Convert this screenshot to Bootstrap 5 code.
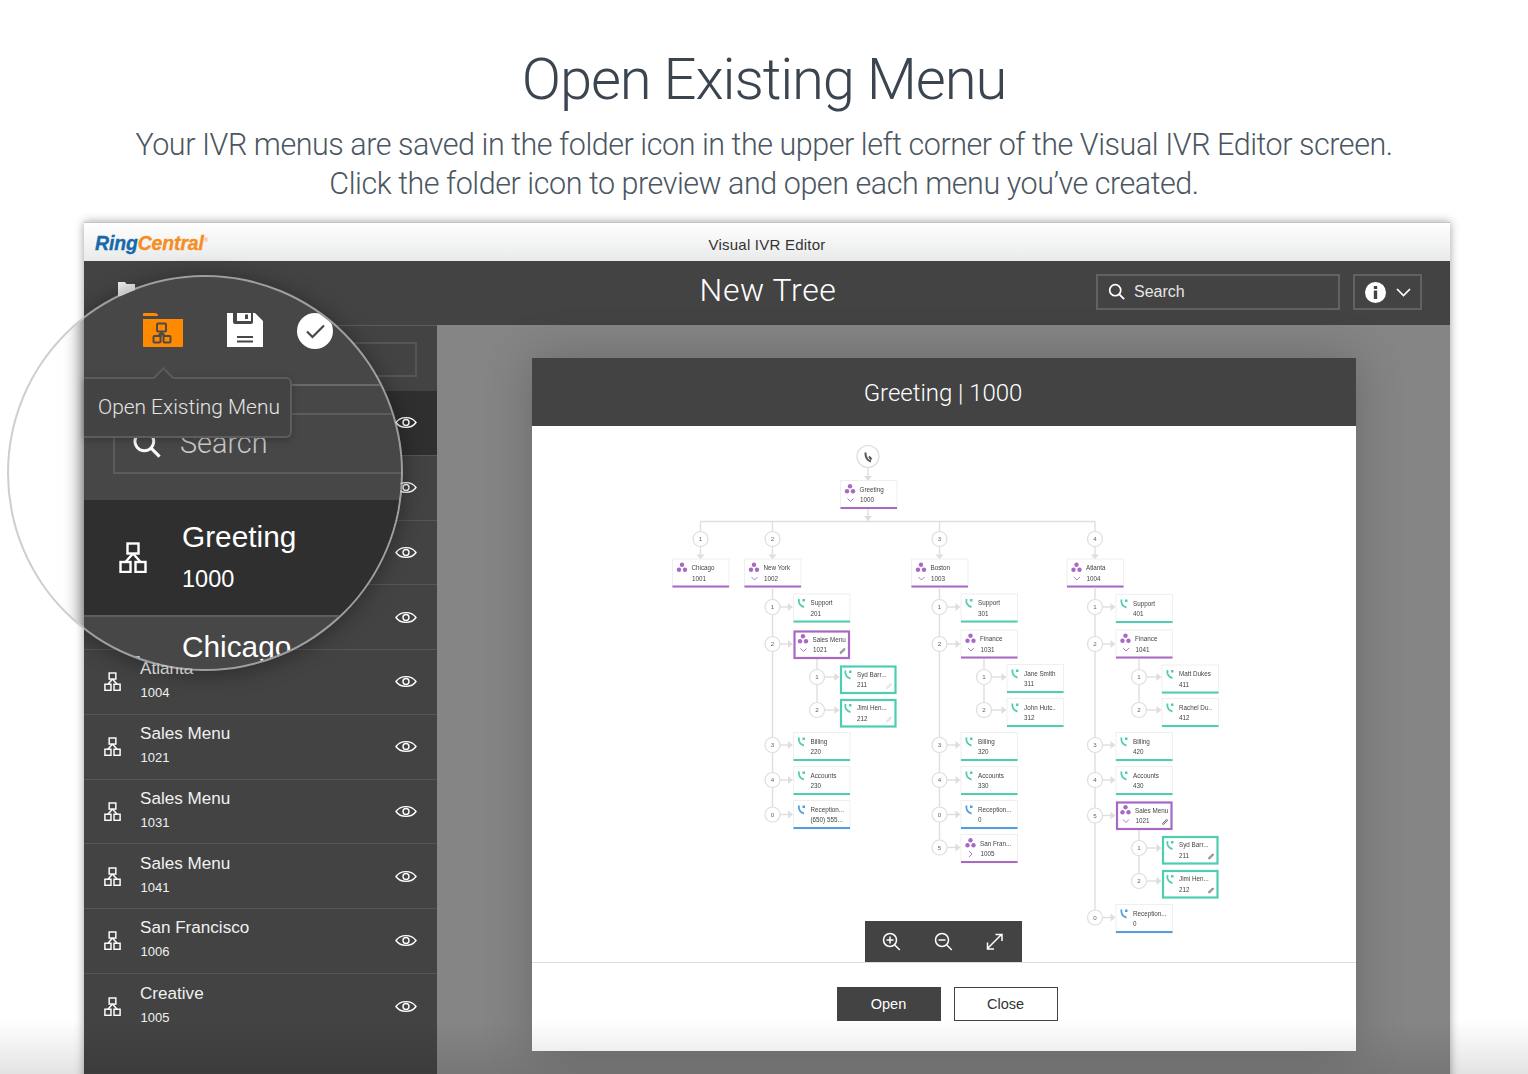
<!doctype html>
<html lang="en">
<head>
<meta charset="utf-8">
<title>Open Existing Menu</title>
<link href="https://cdn.jsdelivr.net/npm/bootstrap@5.3.0/dist/css/bootstrap.min.css" rel="stylesheet">
<style>
html,body{height:1074px;overflow:hidden}
body{position:relative;background:#fff;font-family:"Liberation Sans",Arial,sans-serif;color:#333}
.page-head{padding-top:43px;text-align:center}
.page-title{font:300 58px/72px Roboto,sans-serif;color:#3b4550;margin:0;letter-spacing:-1.15px}
.page-sub{font:300 30.5px/38.5px Roboto,sans-serif;color:#4b5661;margin:11px 0 19px;letter-spacing:-.46px}
.app-win{position:relative;width:1366px;height:900px;margin-left:84px;background:#858585;box-shadow:0 0 9px rgba(0,0,0,.38);overflow:hidden}
.title-bar{height:39px;border-top:1px solid #c4c4c4;background:linear-gradient(#fff,#e9eaea);position:relative}
.brand-logo{position:absolute;left:11px;top:8px;font:italic 700 19.4px/24px "Liberation Sans",sans-serif;color:#f68d1f;letter-spacing:-.1px;-webkit-text-stroke:.35px currentColor}
.brand-logo b{color:#1769ab}
.brand-logo sup{font-size:6px;top:-1.4em;font-weight:400;-webkit-text-stroke:0}
.title-text{font-size:15px;line-height:43px;text-align:center;color:#333;letter-spacing:.22px}
.top-bar{height:64px;background:#434343;color:#fff;padding:0 28px 0 34px}
.top-side{flex:1 1 0}
.top-folder{display:block;margin-bottom:8px}
.tree-name{font:300 32px/1 Roboto,sans-serif;letter-spacing:.6px;padding:0 4px 7px 0;color:#fff}
.top-search{width:244px;height:36px;border:2px solid #626262;padding-left:10px;font-size:16px;color:#e6e6e6;margin-top:-2px;gap:9px;padding-bottom:1px}
.top-info{width:69px;height:36px;border:2px solid #626262;margin-left:13px;margin-top:-2px;padding-left:10px;gap:10px}
.work-area{height:797px}
.side-panel{width:353px;background:#434343;border-top:1px solid #5c5c5c;height:100%;flex:none}
.side-find{height:65px;padding:16px 20px 0 21px}
.side-find div{height:35px;border:2px solid #565656}
.menu-row{height:64.75px;background:transparent;color:#fff;border:0;border-bottom:2px solid #565656;border-radius:0;padding:0 20px}
.menu-row.is-current{background:#2f2f2f}
.menu-icon{width:17px;height:19px;margin-right:19px;flex:none}
.menu-name{font-size:17.1px;line-height:21px;margin-top:-4px;color:#f1f1f1}
.menu-num{font-size:13px;line-height:17px;margin-top:5px;padding-left:.5px;color:#f1f1f1}
.stage{flex:1 1 0;padding-top:33px;min-width:0}
.ivr-modal{width:824px;height:693px;margin:0 0 0 95px;background:#fff;border-radius:0;border:0;box-shadow:0 0 45px rgba(0,0,0,.22)}
.ivr-head{height:68px;background:#434343;color:#fff;font:300 24px/70px Roboto,sans-serif;text-align:center;padding-right:2px;letter-spacing:-.03px}
.ivr-canvas{position:relative;height:537px;border-bottom:1px solid #dcdcdc}
.ivr-canvas svg.chart{display:block;filter:blur(.35px)}
.zoom-tools{position:absolute;left:332.5px;bottom:0;width:157px;height:41px;background:#434343}
.ivr-foot{padding:24px 0 0 6px;gap:13px}
.foot-btn{width:104px;height:34px;border-radius:0;font-size:14.5px;line-height:1;padding:0;border:1px solid #434343}
.foot-btn.is-dark{background:#434343;color:#fff}
.foot-btn.is-line{background:#fff;color:#333}
.lens-shade{position:absolute;left:-77px;top:53px;width:396px;height:396px;border-radius:50%;box-shadow:0 2px 22px rgba(0,0,0,.38)}
.lens{position:absolute;left:7px;top:275px;width:396px;height:396px;border-radius:50%;border:2px solid rgba(165,165,165,.55);overflow:hidden;background:rgba(255,255,255,.45)}
.lens-panel{position:absolute;left:75px;top:0;right:0;bottom:0;background:#474747;box-shadow:-3px 0 16px rgba(0,0,0,.5);color:#fff}
.lens-tools{height:109px;padding:36px 0 0 59px;border-bottom:2px solid #6a6a6a}
.lens-save{margin-left:44px}
.lens-check{margin-left:34px}
.lens-find{height:114px;padding:27px 0 0 29px}
.lens-find div{height:61px;border:2px solid #5d5d5d;border-right:0;font:300 28.8px/1 Roboto,sans-serif;color:#c9c9c9;padding:0 0 0 17px;gap:19px}
.lens-current{height:117px;background:#2f2f2f;border-bottom:2px solid #5d5d5d;padding-left:35px}
.lens-icon{width:28px;height:31px;margin-right:35px;flex:none}
.lens-text{margin-top:-4px}
.lens-name{font-size:29.8px;line-height:36px}
.lens-num{font-size:23.5px;line-height:28px;margin-top:10px}
.lens-next{padding:13px 0 0 35px}
.lens-next .lens-name{margin-top:-1px}
.lens-next .lens-icon{margin-top:26px}
.tip-box{position:absolute;left:0;top:100px;width:208px;height:61px;background:#434343;border:2px solid #5c5c5c;border-left:0;border-radius:0 6px 6px 0;font:300 20.9px/57px Roboto,sans-serif;color:#e4e4e4;padding-left:14px;box-shadow:0 2px 7px rgba(0,0,0,.25)}
.tip-box::before{content:"";position:absolute;left:72px;top:-9px;width:15px;height:15px;background:#434343;border:2px solid #5c5c5c;border-right:0;border-bottom:0;transform:rotate(45deg)}
.fade-foot{position:absolute;left:0;right:0;bottom:0;height:54px;background:linear-gradient(rgba(0,0,0,0),rgba(0,0,0,.11));pointer-events:none}
</style>
</head>
<body>
<svg width="0" height="0" class="position-absolute">
  <symbol id="i-org" viewBox="0 0 28 31"><g fill="none" stroke="currentColor" stroke-width="2.4"><rect x="8.5" y="1.5" width="11" height="10"/><rect x="1.5" y="20" width="10" height="10"/><rect x="16.5" y="20" width="10" height="10"/><path d="M14 11.5 6.500 20M14 11.5 21.500 20"/></g></symbol>
  <symbol id="i-eye" viewBox="0 0 22 15"><path d="M1 7.500C5.500 1 16.500 1 21 7.500 16.500 14 5.500 14 1 7.500Z" fill="none" stroke="currentColor" stroke-width="1.400"/><circle cx="11" cy="7.500" r="3" fill="none" stroke="currentColor" stroke-width="1.400"/></symbol>
  <symbol id="i-find" viewBox="0 0 20 20"><circle cx="8.500" cy="8.500" r="6.500" fill="none" stroke="currentColor" stroke-width="2"/><path d="M13.300 13.300 19 19" stroke="currentColor" stroke-width="2.200" fill="none"/></symbol>
</svg>

<header class="page-head">
  <h1 class="page-title">Open Existing Menu</h1>
  <p class="page-sub">Your IVR menus are saved in the folder icon in the upper left corner of the Visual IVR Editor screen.<br>Click the folder icon to preview and open each menu you’ve created.</p>
</header>

<main class="app-win">
  <div class="title-bar">
    <div class="brand-logo"><b>Ring</b>Central<sup>®</sup></div>
    <div class="title-text">Visual IVR Editor</div>
  </div>
  <div class="top-bar d-flex align-items-center">
    <div class="top-side">
      <svg class="top-folder" width="17" height="14" viewBox="0 0 17 14"><path d="M0 0h7l1.500 2H17v12H0Z" fill="#efefef"/></svg>
    </div>
    <div class="tree-name">New Tree</div>
    <div class="top-side d-flex justify-content-end">
      <div class="top-search d-flex align-items-center">
        <svg width="17" height="17" class="text-white"><use href="#i-find"/></svg>
        <span>Search</span>
      </div>
      <div class="top-info d-flex align-items-center">
        <svg width="21" height="21" viewBox="0 0 21 21"><circle cx="10.500" cy="10.500" r="10.500" fill="#fff"/><rect x="8.800" y="8.500" width="3.400" height="8.500" fill="#434343"/><rect x="8.800" y="4" width="3.400" height="3" fill="#434343"/></svg>
        <svg width="15" height="9" viewBox="0 0 15 9"><path d="M1 1l6.500 6.500L14 1" fill="none" stroke="#fff" stroke-width="1.700"/></svg>
      </div>
    </div>
  </div>
  <div class="work-area d-flex">
    <aside class="side-panel">
      <div class="side-find"><div></div></div>
      <div class="list-group list-group-flush" id="menuList"></div>
    </aside>
    <section class="stage">
      <div class="card ivr-modal">
        <div class="ivr-head">Greeting | 1000</div>
        <div class="ivr-canvas">
          <svg class="chart" id="chart" width="824" height="536" viewBox="532 426 824 536"></svg>
          <div class="zoom-tools d-flex">
            <svg width="157" height="41" viewBox="0 0 157 41" fill="none" stroke="#fff" stroke-width="1.500">
              <circle cx="25" cy="19" r="6.500"/><path d="M21.500 19h7M25 15.500v7M29.800 24l5 5" />
              <circle cx="77" cy="19" r="6.500"/><path d="M73.500 19h7M81.800 24l5 5"/>
              <path d="M123 27l13-13M130.500 13.500h6.500v6.500M122.500 21.500v6.500h6.500"/>
            </svg>
          </div>
        </div>
        <div class="ivr-foot d-flex justify-content-center">
          <button type="button" class="btn foot-btn is-dark">Open</button>
          <button type="button" class="btn foot-btn is-line">Close</button>
        </div>
      </div>
    </section>
  </div>
  <div class="lens-shade"></div>
</main>

<div class="lens">
  <div class="lens-panel">
    <div class="lens-tools d-flex align-items-start">
      <svg width="40" height="34" viewBox="0 0 40 34"><path d="M0 1q0-1 1-1h11q2 0 3 2v1H0ZM0 6h40v27q0 1-1 1H1q-1 0-1-1Z" fill="#ff8a00"/><g fill="none" stroke="#4a4a4a" stroke-width="2"><rect x="14" y="10.500" width="9" height="8" rx="1"/><rect x="10.500" y="23" width="7" height="6.500" rx="1"/><rect x="20.500" y="23" width="7" height="6.500" rx="1"/><path d="M18.500 18.500v5M15 23l3.500-3.500L22 23"/></g></svg>
      <svg width="36" height="34" viewBox="0 0 36 34" class="lens-save"><path d="M0 0h6v9q0 2 2 2h16q2 0 2-2V0h2l8 8v26H0Z" fill="#fff"/><rect x="9" y="0" width="15" height="9" fill="#474747"/><rect x="10" y="0" width="14" height="8" fill="#fff"/><rect x="18" y="1.500" width="3" height="4.500" fill="#474747"/><path d="M10 24h16M10 28.500h16" stroke="#474747" stroke-width="2"/></svg>
      <svg width="36" height="36" viewBox="0 0 36 36" class="lens-check"><circle cx="18" cy="18" r="18" fill="#fff"/><path d="M10 18.500l5.500 5.500L27 12.500" fill="none" stroke="#474747" stroke-width="2.200"/></svg>
    </div>
    <div class="lens-find">
      <div class="d-flex align-items-center">
        <svg width="29" height="29" class="text-light"><use href="#i-find"/></svg>
        <span>Search</span>
      </div>
    </div>
    <div class="lens-current d-flex align-items-center">
      <svg class="lens-icon"><use href="#i-org"/></svg>
      <div class="lens-text">
        <div class="lens-name">Greeting</div>
        <div class="lens-num">1000</div>
      </div>
    </div>
    <div class="lens-next d-flex">
      <svg class="lens-icon"><use href="#i-org"/></svg>
      <div class="lens-name">Chicago</div>
    </div>
    <div class="tip-box">Open Existing Menu</div>
  </div>
</div>
<div class="fade-foot"></div>

<script>
(function(){
  var rows=[["Greeting","1000",1],["Chicago","1001"],["New York","1002"],["Boston","1003"],["Atlanta","1004"],["Sales Menu","1021"],["Sales Menu","1031"],["Sales Menu","1041"],["San Francisco","1006"],["Creative","1005"]];
  document.getElementById("menuList").innerHTML=rows.map(function(r){
    return '<div class="list-group-item menu-row d-flex align-items-center'+(r[2]?' is-current':'')+'">'+
      '<svg class="menu-icon"><use href="#i-org"/></svg>'+
      '<div class="flex-grow-1"><div class="menu-name">'+r[0]+'</div><div class="menu-num">'+r[1]+'</div></div>'+
      '<svg width="22" height="15" class="text-white"><use href="#i-eye"/></svg></div>';
  }).join("");

  var G="#dedede",P="#a868c4",T="#4fcdb0",B="#4f9fe0",out=[];
  function line(x1,y1,x2,y2){out.push('<path d="M'+x1+' '+y1+'L'+x2+' '+y2+'" stroke="'+G+'" stroke-width="1.400" fill="none"/>');}
  function down(x,y){out.push('<path d="M'+(x-4)+' '+(y-5)+'h8l-4 5Z" fill="'+G+'"/>');}
  function right(x,y){out.push('<path d="M'+(x-5)+' '+(y-4)+'v8l5-4Z" fill="'+G+'"/>');}
  function ring(x,y,t){
    out.push('<circle cx="'+x+'" cy="'+y+'" r="7.500" fill="#fff" stroke="'+G+'" stroke-width="1.200"/>');
    out.push('<text x="'+x+'" y="'+(y+2.200)+'" font-size="6.200" fill="#666" text-anchor="middle">'+t+'</text>');
  }
  function org(x,y){out.push('<g fill="'+P+'"><circle cx="'+x+'" cy="'+(y-2.800)+'" r="2.200"/><circle cx="'+(x-3)+'" cy="'+(y+2.200)+'" r="2.200"/><circle cx="'+(x+3)+'" cy="'+(y+2.200)+'" r="2.200"/></g>');}
  function phone(x,y,c){out.push('<path d="M'+(x-2.500)+' '+(y-4)+'C'+(x-3.500)+' '+y+' '+(x-1)+' '+(y+3.500)+' '+(x+2.500)+' '+(y+4)+'" fill="none" stroke="'+c+'" stroke-width="1.800"/><path d="M'+(x+1)+' '+(y-4)+'h2.500v2.500h-2.500Z" fill="'+c+'"/>');}
  function node(x,y,o){
    var k=o.k, c=k=="p"?P:k=="b"?B:T, tx=k=="p"?x+19:x+17, w=o.w||56.500, h=o.h||28.500;
    if(o.hi){
      out.push('<rect x="'+(x+1)+'" y="'+(y+1)+'" width="'+(w-2)+'" height="'+(h-2)+'" fill="#fff" stroke="'+c+'" stroke-width="2.200"/>');
    }else{
      out.push('<rect x="'+x+'" y="'+y+'" width="'+w+'" height="'+h+'" fill="#fff" stroke="#efefef" stroke-width="1"/>');
      out.push('<rect x="'+x+'" y="'+(y+h-2)+'" width="'+w+'" height="2" fill="'+c+'"/>');
    }
    if(k=="p"){
      org(x+9.500,y+8.500);
      if(o.a!="none"){
        var ay=y+19.500;
        out.push('<path d="'+(o.a=="r"?'M'+(x+8)+' '+(ay-3)+'l3 3-3 3':'M'+(x+7)+' '+(ay-1.500)+'l3 3 3-3')+'" fill="none" stroke="'+P+'" stroke-width=".900"/>');
      }
    }else{phone(x+8,y+9,c);}
    out.push('<text x="'+tx+'" y="'+(y+11)+'" font-size="6.300" fill="#444">'+o.t+'</text>');
    out.push('<text x="'+(tx+(k=="p"?.5:0))+'" y="'+(y+21.800)+'" font-size="6.300" fill="#444">'+o.n+'</text>');
    if(o.pen){
      var px=x+w-7.500,py=y+h-8;
      out.push('<path d="M'+(px-1.800)+' '+(py+1.800)+'L'+(px+1.800)+' '+(py-1.800)+'" stroke="'+(o.pen==1?"#666":"#d8d8d8")+'" stroke-width="2" stroke-linecap="round"/><path d="M'+(px-1.800)+' '+(py+1.800)+'L'+(px+1.800)+' '+(py-1.800)+'" stroke="#fff" stroke-width=".700" stroke-linecap="round"/>');
    }
  }
  function branch(cx,list,from){
    var last=list[list.length-1];
    line(cx,from,cx,last.cy);
    list.forEach(function(r){
      line(cx,r.cy,r.x-3,r.cy); right(r.x-.5,r.cy);
    });
    list.forEach(function(r){ring(cx,r.cy,r.d);node(r.x,r.y,r);});
  }
  function R(d,x,y,cy,k,t,n,extra){var o={d:d,x:x,y:y,cy:cy,k:k,t:t,n:n};for(var p in extra||{})o[p]=extra[p];return o;}

  // root
  line(868,468,868,476);down(868,481);
  line(868,509,868,521);down(868,521);
  line(700.500,521.500,1095,521.500);
  out.push('<circle cx="868" cy="456.500" r="11" fill="#fff" stroke="'+G+'" stroke-width="1.200"/>');
  out.push('<path d="M865.500 452.500C865 457.500 868 461 871 461.500M869 456.500l2.500 3" fill="none" stroke="#555" stroke-width="2"/>');
  node(840.500,480.500,{k:"p",t:"Greeting",n:"1000"});

  [[700.500,"1",672.500,"Chicago","1001","none"],[772.500,"2",744.500,"New York","1002"],[939.500,"3",911.500,"Boston","1003"],[1095,"4",1067,"Atlanta","1004"]].forEach(function(a){
    line(a[0],521.500,a[0],555);down(a[0],559.500);
    ring(a[0],539,a[1]);
    node(a[2],559,{k:"p",t:a[3],n:a[4],a:a[5]});
  });

  // New York
  branch(817,[R("1",840,665.500,677,"t","Syd Barr...","211",{hi:1,pen:2}),R("2",840,699,710,"t","Jimi Hen...","212",{hi:1,pen:2})],659);
  branch(772.500,[
    R("1",793.500,594,607,"t","Support","201"),
    R("2",793.500,630.500,644,"p","Sales Menu","1021",{hi:1,pen:1}),
    R("3",793.500,732.500,745,"t","Billing","220"),
    R("4",793.500,766.500,780,"t","Accounts","230"),
    R("0",793.500,800.500,814.500,"b","Reception...","(650) 555...")
  ],587.500);
  // Boston
  branch(984,[R("1",1007,664.500,677,"t","Jane Smith","311"),R("2",1007,698.500,710,"t","John Hutc..","312")],659);
  branch(939.500,[
    R("1",961,594,607,"t","Support","301"),
    R("2",961,630,644,"p","Finance","1031"),
    R("3",961,732.500,745,"t","Billing","320"),
    R("4",961,766.500,780,"t","Accounts","330"),
    R("0",961,800.500,814.500,"b","Reception...","0"),
    R("5",961,834.500,847.500,"p","San Fran...","1005",{a:"r"})
  ],587.500);
  // Atlanta
  branch(1139,[R("1",1162,665,677,"t","Matt Dukes","411"),R("2",1162,698.500,710,"t","Rachel Du..","412")],659);
  branch(1139,[R("1",1162,836,848,"t","Syd Barr...","211",{hi:1,pen:1}),R("2",1162,870,881,"t","Jimi Hen...","212",{hi:1,pen:1})],830);
  branch(1095,[
    R("1",1116,594.500,607,"t","Support","401"),
    R("2",1116,630,644,"p","Finance","1041"),
    R("3",1116,732.500,745,"t","Billing","420"),
    R("4",1116,766.500,780,"t","Accounts","430"),
    R("5",1116,801.500,815.500,"p","Sales Menu","1021",{hi:1,pen:1}),
    R("0",1116,904.500,917.500,"b","Reception...","0")
  ],587.500);
  document.getElementById("chart").innerHTML='<g font-family="Liberation Sans, Arial, sans-serif">'+out.join("")+'</g>';
})();
</script>
<script src="https://cdn.jsdelivr.net/npm/bootstrap@5.3.0/dist/js/bootstrap.bundle.min.js"></script>
</body>
</html>
